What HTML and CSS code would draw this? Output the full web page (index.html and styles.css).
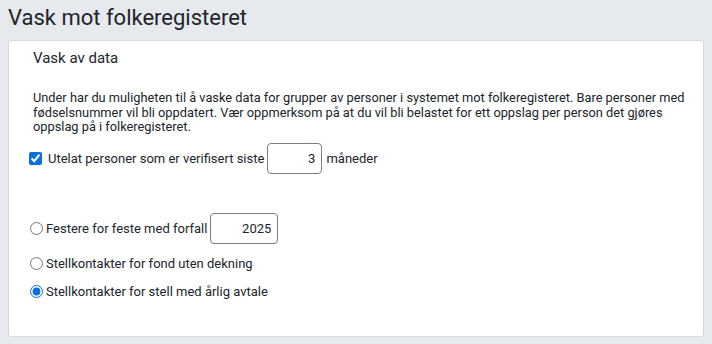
FILE: index.html
```html
<!DOCTYPE html>
<html>
<head>
<meta charset="utf-8">
<link rel="stylesheet" href="styles.css">
</head>
<body>
<h1 class="page-title">Vask mot folkeregisteret</h1>
<section class="card">
  <h2 class="card-title">Vask av data</h2>
  <p class="intro">Under har du muligheten til å vaske data for grupper av personer i systemet mot folkeregisteret. Bare personer med fødselsnummer vil bli oppdatert. Vær oppmerksom på at du vil bli belastet for ett oppslag per person det gjøres oppslag på i folkeregisteret.</p>
  <label class="row check-row">
    <input type="checkbox" checked>
    <span>Utelat personer som er verifisert siste</span>
    <input type="text" class="num months" value="3">
    <span>måneder</span>
  </label>
  <div class="options">
    <label class="row radio-row first">
      <input type="radio" name="opt">
      <span>Festere for feste med forfall</span>
      <input type="text" class="num year" value="2025">
    </label>
    <label class="row radio-row">
      <input type="radio" name="opt">
      <span>Stellkontakter for fond uten dekning</span>
    </label>
    <label class="row radio-row">
      <input type="radio" name="opt" checked>
      <span>Stellkontakter for stell med årlig avtale</span>
    </label>
  </div>
</section>
</body>
</html>
```
FILE: styles.css
```css
html, body {
  margin: 0;
  padding: 0;
  background: #e6e9ed;
  font-family: Roboto, "Liberation Sans", sans-serif;
  color: #212529;
}
body {
  padding: 4px 8px 7px 8px;
}
.page-title {
  margin: 0;
  font-size: 22px;
  font-weight: 400;
  line-height: 28px;
  height: 36px;
}
.card {
  background: #fff;
  border: 1px solid #d6d9dd;
  border-radius: 3px;
  height: 297px;
  box-sizing: border-box;
  padding: 7px 8px 0 24px;
}
.card-title {
  margin: 0;
  font-size: 15px;
  font-weight: 400;
  line-height: 20px;
}
.intro {
  margin: 23px 0 0 0;
  font-size: 12.8px;
  line-height: 14.6px;
}
.row {
  display: flex;
  align-items: center;
  font-size: 13px;
}
.check-row {
  margin-top: 8px;
  margin-left: -4px;
  height: 32px;
}
.check-row input[type=checkbox] {
  width: 13px;
  height: 13px;
  margin: 0 6px 0 0;
  accent-color: #0b70db;
}
.num {
  font-family: Roboto, "Liberation Sans", sans-serif;
  font-size: 13px;
  text-align: right;
  border: 1px solid #7a7e84;
  border-radius: 4px;
  box-sizing: border-box;
  height: 31px;
  padding: 0 6px;
  color: #212529;
  background: #fff;
}
.months {
  width: 55px;
  margin: 0 4px 0 3px;
}
.year {
  width: 68px;
  margin-left: 3px;
}
.options {
  margin-top: 32.5px;
  display: flex;
  flex-direction: column;
}
.radio-row {
  margin-left: -3px;
  height: 28px;
}
.radio-row.first {
  height: 42px;
}
.radio-row input[type=radio] {
  width: 13px;
  height: 13px;
  margin: 0 3px 0 0;
  accent-color: #0b70db;
}
```
